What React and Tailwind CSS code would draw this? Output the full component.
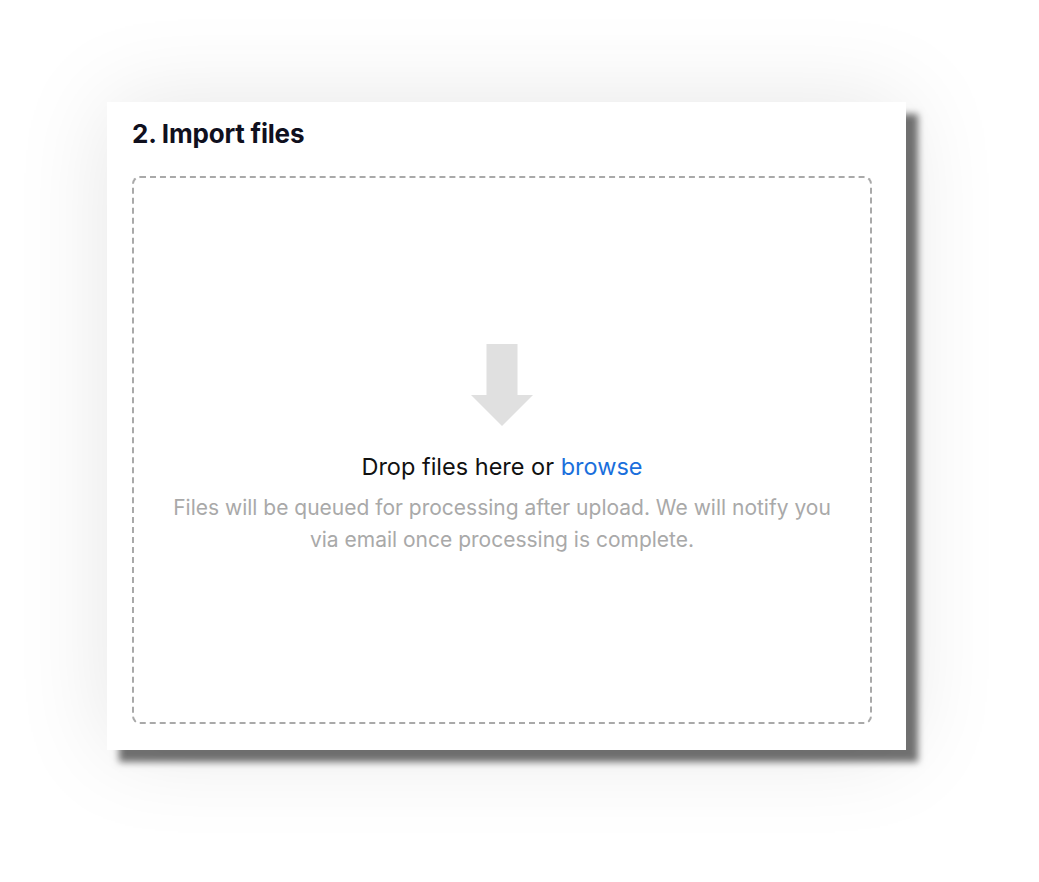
export default function App() {
  return (
    <div className="min-h-[882px] w-full bg-white pl-[107px] pt-[102px] font-['Inter','Liberation_Sans',sans-serif]">
      <div className="w-[799px] h-[648px] bg-white pl-[25px] pr-[34px] pt-[16px] pb-[26px] flex flex-col shadow-[12px_12px_7px_rgba(0,0,0,0.55),0_0_90px_rgba(0,0,0,0.10)]">
        <h2 className="text-[26px] leading-[32px] font-bold text-[#10101e] tracking-[-0.2px]">
          2. Import files
        </h2>
        <div className="mt-[26px] flex-1 rounded-[8px] border-2 border-dashed border-[#a9a9a9] flex flex-col items-center justify-center">
          <svg width="62" height="82" viewBox="0 0 62 82" className="block">
            <path d="M15.5 0H46.5V51H62L31 82L0 51H15.5Z" fill="#e0e0e0" />
          </svg>
          <p className="mt-[25px] text-[23.5px] leading-[32px] text-[#111]">
            Drop files here or <span className="text-[#1a6fdc]">browse</span>
          </p>
          <p className="mt-[9px] text-[21px] leading-[32px] text-[#a9a9a9] text-center w-[672px]">
            Files will be queued for processing after upload. We will notify you via email once processing is complete.
          </p>
        </div>
      </div>
    </div>
  );
}
